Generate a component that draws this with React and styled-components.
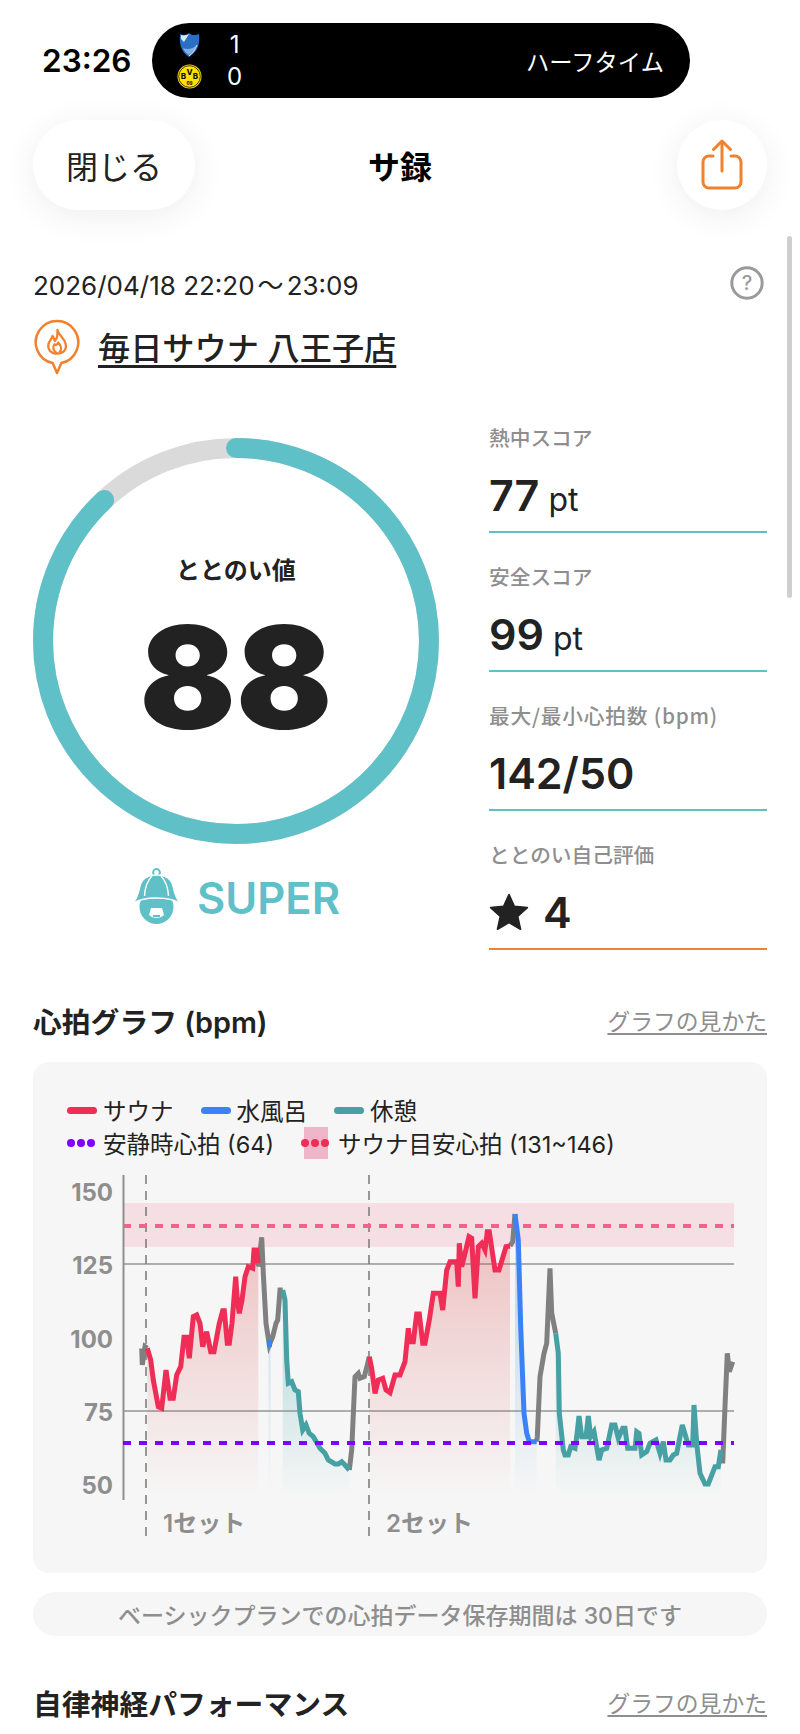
import React from 'react';
import styled, { createGlobalStyle } from 'styled-components';

const TEAL = '#5FC0C7';
const ORANGE = '#F0822F';
const GRAY = '#8E8E8E';
const INK = '#222222';

const GlobalStyle = createGlobalStyle`
  html, body {
    margin: 0;
    padding: 0;
    background: #fff;
  }
  body {
    font-family: Inter, "Noto Sans CJK JP", sans-serif;
    color: ${INK};
  }
`;

const Screen = styled.div`
  position: relative;
  width: 800px;
  height: 1734px;
  overflow: hidden;
  background: #fff;
`;

const StatusBar = styled.div`
  display: flex;
  align-items: center;
  padding: 23px 0 0 42px;
`;

const Clock = styled.div`
  width: 110px;
  font-size: 31.5px;
  font-weight: 600;
  color: #000;
`;

const LivePill = styled.div`
  display: flex;
  align-items: center;
  justify-content: space-between;
  width: 538px;
  height: 75px;
  box-sizing: border-box;
  padding: 0 26px 0 24px;
  border-radius: 38px;
  background: #000;
  color: #fff;
`;

const Match = styled.div`
  display: grid;
  grid-template-columns: 26px auto;
  column-gap: 25px;
  row-gap: 4px;
  align-items: center;
  justify-items: center;
  font-size: 24px;
  line-height: 28px;
`;

const MatchState = styled.div`
  font-size: 23.3px;
`;

const Header = styled.header`
  display: grid;
  grid-template-columns: 1fr auto 1fr;
  align-items: center;
  height: 90px;
  margin-top: 22px;
  padding: 0 33px;
`;

const CloseButton = styled.div`
  display: flex;
  align-items: center;
  justify-content: center;
  justify-self: start;
  width: 162px;
  height: 90px;
  border-radius: 45px;
  background: #fff;
  font-size: 32px;
  box-shadow: 0 6px 34px rgba(0, 0, 0, 0.07);
`;

const Title = styled.h1`
  margin: 0;
  font-size: 32px;
  font-weight: 700;
  color: #000;
`;

const ShareButton = styled.div`
  display: flex;
  align-items: center;
  justify-content: center;
  justify-self: end;
  width: 90px;
  height: 90px;
  border-radius: 50%;
  background: #fff;
  box-shadow: 0 6px 34px rgba(0, 0, 0, 0.07);
`;

const Scrollbar = styled.div`
  position: absolute;
  top: 236px;
  right: 8px;
  width: 5px;
  height: 362px;
  border-radius: 3px;
  background: #cfcfcf;
`;

const Content = styled.main`
  padding: 0 33px;
`;

const DateRow = styled.div`
  display: flex;
  align-items: center;
  justify-content: space-between;
  height: 34px;
  margin-top: 56px;
  padding-right: 3px;
  font-size: 26px;
`;

const Tilde = styled.span`
  margin: 0 3px;
`;

const Venue = styled.div`
  display: flex;
  align-items: flex-start;
  gap: 17px;
  margin-top: 19px;
  height: 56px;
`;

const VenueName = styled.a`
  margin-top: 8px;
  font-size: 32.2px;
  font-weight: 500;
  line-height: 44px;
  text-decoration: underline;
  text-decoration-thickness: 3px;
  text-underline-offset: 5px;
  color: ${INK};
`;

const Scores = styled.section`
  display: flex;
  justify-content: space-between;
  margin-top: 18px;
`;

const RingColumn = styled.div`
  display: flex;
  flex-direction: column;
  align-items: center;
  width: 406px;
  margin-top: 45px;
`;

const RingStack = styled.div`
  display: grid;
  width: 406px;
  height: 406px;

  & > * {
    grid-area: 1 / 1;
  }
`;

const RingCenter = styled.div`
  display: flex;
  flex-direction: column;
  align-items: center;
  padding-top: 115px;
`;

const RingLabel = styled.div`
  font-size: 24px;
  font-weight: 600;
  line-height: 36px;
`;

const RingValue = styled.div`
  margin-top: 3px;
  font-size: 142px;
  font-weight: 900;
  line-height: 170px;
`;

const Rank = styled.div`
  display: flex;
  align-items: center;
  gap: 15px;
  margin-top: 24px;
  font-size: 43.5px;
  font-weight: 600;
  color: ${TEAL};
`;

const Metrics = styled.div`
  display: flex;
  flex-direction: column;
  width: 278px;
`;

const Metric = styled.div`
  display: flex;
  flex-direction: column;
  height: 140px;
  box-sizing: border-box;
  padding-top: 30px;
  border-bottom: 2px solid ${(p) => (p.$accent ? ORANGE : TEAL)};
  margin-bottom: -1px;
`;

const MetricLabel = styled.div`
  font-family: "Noto Sans CJK JP", sans-serif;
  font-size: 20.7px;
  font-weight: 500;
  line-height: 28px;
  letter-spacing: ${(p) => p.$tracking || 0}px;
  color: ${GRAY};
`;

const MetricValue = styled.div`
  display: flex;
  align-items: baseline;
  gap: 9px;
  margin-top: 16px;
  font-size: 43px;
  font-weight: 600;
  line-height: 56px;
`;

const Unit = styled.span`
  font-size: 32px;
  font-weight: 400;
`;

const SectionHead = styled.div`
  display: flex;
  align-items: center;
  justify-content: space-between;
  height: 40px;
  margin-top: ${(p) => p.$top}px;
`;

const SectionTitle = styled.h2`
  margin: 0;
  font-size: 28.8px;
  font-weight: 600;
`;

const GuideLink = styled.a`
  font-size: 22.8px;
  color: ${GRAY};
  text-decoration: underline;
  text-underline-offset: 3px;
`;

const ChartCard = styled.div`
  height: 511px;
  margin-top: 22px;
  border-radius: 16px;
  background: #f6f6f6;
  overflow: hidden;
`;

const Legend = styled.div`
  display: flex;
  flex-direction: column;
  gap: 1px;
  box-sizing: border-box;
  padding: 32px 0 0 34px;
  height: 103px;
`;

const LegendRow = styled.div`
  display: flex;
  align-items: center;
  gap: ${(p) => p.$gap}px;
  height: 32px;
`;

const LegendItem = styled.div`
  display: flex;
  align-items: center;
  gap: ${(p) => p.$gap || 6}px;
  font-size: 23.5px;
  color: ${INK};
`;

const Swatch = styled.span`
  width: 30px;
  height: 7px;
  border-radius: 4px;
  background: ${(p) => p.$color};
`;

const Dots = styled.span`
  display: flex;
  flex: none;
  gap: 2px;
  width: 30px;
`;

const Dot = styled.i`
  width: 8px;
  height: 8px;
  border-radius: 50%;
  background: ${(p) => p.$color};
`;

const TargetSwatch = styled.span`
  display: flex;
  align-items: center;
  justify-content: center;
  width: 24px;
  height: 32px;
  background: #efb6c9;
`;

const ChartSvg = styled.svg`
  display: block;
`;

const Notice = styled.div`
  display: flex;
  align-items: center;
  justify-content: center;
  height: 44px;
  margin-top: 19px;
  border-radius: 22px;
  background: #f6f6f6;
  font-size: 23px;
  font-weight: 500;
  color: ${GRAY};
`;

const StarGlyph = styled.svg`
  align-self: center;
  margin-right: 5px;
`;

// traced from the reference crops: left crop starts at x30, right crop at x400, both 3x
const fromLeft = (pts) => pts.map(([x, y]) => [30 + x / 3, 1060 + y / 3]);
const fromRight = (pts) => pts.map(([x, y]) => [400 + x / 3, 1060 + y / 3]);
const toStr = (pts) => pts.map(([x, y]) => `${x.toFixed(1)},${y.toFixed(1)}`).join(' ');

const red1 = fromLeft([[352,865],[362,900],[370,960],[385,1040],[395,1045],[408,930],[420,1015],[430,1015],[440,945],[452,920],[462,832],[470,832],[478,895],[490,770],[500,765],[510,790],[518,860],[530,815],[542,875],[552,875],[568,790],[578,752],[583,752],[592,850],[598,850],[606,790],[617,650],[622,720],[628,760],[636,720],[645,650],[655,620],[668,625],[672,570],[680,570],[685,610]]);
const teal1 = fromLeft([[758,690],[765,720],[770,900],[775,970],[785,965],[795,990],[805,995],[810,1060],[818,1110],[828,1095],[838,1120],[850,1130],[870,1165],[885,1180],[895,1200],[915,1212],[925,1212],[935,1205],[945,1215],[958,1230]]);
const red2 = [
  ...fromLeft([[1018,890],[1025,925],[1035,1000],[1045,960],[1058,955],[1068,990],[1080,998],[1095,945],[1110,945]]),
  ...fromRight([[15,905],[25,805],[30,845],[40,845],[50,762],[58,762],[68,850],[75,850],[88,780],[100,700],[120,700],[128,750],[140,630],[150,605],[170,605],[175,680],[178,550],[185,620],[195,580],[207,530],[215,535],[225,715],[235,560],[245,550],[255,570],[262,515],[268,515],[285,630],[297,630],[318,560],[330,558]]),
];
const blue2 = fromRight([[345,462],[355,540],[362,800],[372,1060],[380,1120],[388,1145],[410,1145]]);
const teal2 = fromRight([[467,820],[475,880],[478,1060],[490,1170],[495,1185],[505,1185],[512,1160],[525,1165],[530,1130],[537,1068],[545,1130],[558,1130],[565,1068],[572,1130],[582,1115],[597,1200],[605,1170],[620,1165],[635,1095],[645,1095],[655,1135],[668,1105],[675,1105],[683,1165],[705,1165],[710,1115],[717,1120],[725,1185],[740,1175],[750,1150],[768,1140],[780,1180],[790,1145],[798,1200],[810,1200],[820,1185],[830,1180],[847,1095],[865,1155],[878,1155],[882,1035],[890,1150],[900,1240],[915,1272],[925,1272],[945,1220],[955,1220],[963,1170]]);

const grayTraces = [
  fromLeft([[335,865],[337,915],[345,860],[352,865]]),
  fromLeft([[685,620],[695,532],[700,640],[708,790],[718,855],[728,830],[738,790],[743,780],[750,690],[758,690]]),
  fromLeft([[958,1230],[965,1170],[975,950],[985,940],[990,955],[1003,950],[1012,915],[1018,890]]),
  fromRight([[330,558],[338,545],[345,462]]),
  fromRight([[410,1145],[412,1130],[420,950],[432,880],[440,850],[450,625],[455,760],[467,820]]),
  fromRight([[963,1170],[968,1210],[975,1040],[982,880],[988,935],[998,905]]),
];

const AREA_BOTTOM = 1495;
const areaOf = (pts) =>
  toStr([...pts, [pts[pts.length - 1][0], AREA_BOTTOM], [pts[0][0], AREA_BOTTOM]]);

const yTicks = [
  [150, 1192],
  [125, 1265],
  [100, 1339],
  [75, 1412],
  [50, 1485],
];

function HeartChart() {
  return (
    <ChartSvg width="734" height="408" viewBox="33 1165 734 408">
      <defs>
        <linearGradient id="redFill" gradientUnits="userSpaceOnUse" x1="0" y1="1240" x2="0" y2={AREA_BOTTOM}>
          <stop offset="0" stopColor="#dc4a4a" stopOpacity="0.3" />
          <stop offset="1" stopColor="#dc4a4a" stopOpacity="0" />
        </linearGradient>
        <linearGradient id="blueFill" gradientUnits="userSpaceOnUse" x1="0" y1="1300" x2="0" y2={AREA_BOTTOM}>
          <stop offset="0" stopColor="#5aa0d8" stopOpacity="0.3" />
          <stop offset="1" stopColor="#5aa0d8" stopOpacity="0" />
        </linearGradient>
        <linearGradient id="tealFill" gradientUnits="userSpaceOnUse" x1="0" y1="1370" x2="0" y2={AREA_BOTTOM}>
          <stop offset="0" stopColor="#46a8a8" stopOpacity="0.25" />
          <stop offset="1" stopColor="#46a8a8" stopOpacity="0" />
        </linearGradient>
      </defs>

      <rect x="123" y="1203" width="611" height="44" fill="#f5dfe5" />
      <line x1="123" x2="734" y1="1264" y2="1264" stroke="#adadad" strokeWidth="2" />
      <line x1="123" x2="734" y1="1411" y2="1411" stroke="#adadad" strokeWidth="2" />
      <line x1="123.5" x2="123.5" y1="1175" y2="1500" stroke="#8f8f8f" strokeWidth="2" />

      <line x1="146" x2="146" y1="1175" y2="1542" stroke="#777" strokeWidth="1.5" strokeDasharray="9 7" />
      <line x1="369" x2="369" y1="1175" y2="1542" stroke="#777" strokeWidth="1.5" strokeDasharray="9 7" />

      <polygon points={areaOf(red1)} fill="url(#redFill)" />
      <polygon points={areaOf(red2)} fill="url(#redFill)" />
      <polygon points={areaOf(blue2)} fill="url(#blueFill)" />
      <polygon points={areaOf(teal1)} fill="url(#tealFill)" />
      <polygon points={areaOf(teal2)} fill="url(#tealFill)" />
      <rect x="268.5" y="1345" width="2" height="150" fill="url(#blueFill)" />

      <line x1="123" x2="734" y1="1226" y2="1226" stroke="#f0648c" strokeWidth="4" strokeDasharray="8 8" />

      {grayTraces.map((pts, i) => (
        <polyline key={i} points={toStr(pts)} fill="none" stroke="#808080" strokeWidth="5" />
      ))}
      <polyline points={toStr(red1)} fill="none" stroke="#ef2d56" strokeWidth="5" />
      <polyline points={toStr(red2)} fill="none" stroke="#ef2d56" strokeWidth="5" />
      <polyline points={toStr(blue2)} fill="none" stroke="#3b82f6" strokeWidth="5" />
      <line x1="269.5" x2="269.5" y1="1340" y2="1347" stroke="#3b82f6" strokeWidth="5" />
      <polyline points={toStr(teal1)} fill="none" stroke="#46a0a4" strokeWidth="5" />
      <polyline points={toStr(teal2)} fill="none" stroke="#46a0a4" strokeWidth="5" />

      <line x1="123" x2="734" y1="1443" y2="1443" stroke="#7f00ff" strokeWidth="4" strokeDasharray="8 8" />

      {yTicks.map(([label, y]) => (
        <text key={label} x="113" y={y + 9} textAnchor="end" fontSize="24" fontWeight="700" fill={GRAY} fontFamily="Inter, sans-serif">
          {label}
        </text>
      ))}
      <text x="163" y="1532" fontSize="24" fontWeight="600" fill={GRAY} fontFamily='Inter, "Noto Sans CJK JP", sans-serif'>1セット</text>
      <text x="386" y="1532" fontSize="24" fontWeight="600" fill={GRAY} fontFamily='Inter, "Noto Sans CJK JP", sans-serif'>2セット</text>
    </ChartSvg>
  );
}

function ScoreRing() {
  const r = 193;
  const c = 2 * Math.PI * r;
  return (
    <svg width="406" height="406" viewBox="0 0 406 406">
      <circle cx="203" cy="203" r={r} fill="none" stroke="#dadada" strokeWidth="20" />
      <circle
        cx="203"
        cy="203"
        r={r}
        fill="none"
        stroke={TEAL}
        strokeWidth="20"
        strokeLinecap="round"
        strokeDasharray={`${c * 0.88} ${c}`}
        transform="rotate(-90 203 203)"
      />
    </svg>
  );
}

function HoffenheimCrest() {
  return (
    <svg width="22" height="24" viewBox="0 0 22 24">
      <path d="M2 1 C7 3 10 1 11 0 C13 2 17 3 21 1 C22 9 21 18 11 24 C3 19 1 10 2 1 Z" fill="#2a6fc4" />
      <path d="M3 2 C6 3 9 2 11 1 L6 9 L3 6 Z" fill="#dbe8f5" />
      <path d="M5 15 C9 17 14 16 18 13 C16 18 14 20 11 22 C8 20 6 18 5 15 Z" fill="#7fb0e2" />
      <path d="M19 12 C17 17 15 20 11 23" fill="none" stroke="#e6eef7" strokeWidth="1" />
    </svg>
  );
}

function DortmundCrest() {
  return (
    <svg width="25" height="25" viewBox="0 0 25 25" fontFamily="Inter, sans-serif" fontWeight="800" fill="#111" textAnchor="middle">
      <circle cx="12.5" cy="12.5" r="12" fill="#ffe100" />
      <circle cx="12.5" cy="12.5" r="10.8" fill="none" stroke="#111" strokeWidth="0.8" />
      <text x="6.5" y="15" fontSize="8">B</text>
      <text x="12.5" y="10.5" fontSize="8">V</text>
      <text x="18.5" y="15" fontSize="8">B</text>
      <text x="12.5" y="20.5" fontSize="4.5">09</text>
    </svg>
  );
}

function ShareIcon() {
  return (
    <svg width="44" height="52" viewBox="0 0 44 52" fill="none" stroke={ORANGE} strokeWidth="3" strokeLinecap="round" strokeLinejoin="round">
      <path d="M13 17 H9 a6 6 0 0 0 -6 6 V43 a6 6 0 0 0 6 6 H35 a6 6 0 0 0 6 -6 V23 a6 6 0 0 0 -6 -6 H31" />
      <path d="M22 32 V3" />
      <path d="M13.5 10.5 L22 2 L30.5 10.5" />
    </svg>
  );
}

function HelpIcon() {
  return (
    <svg width="34" height="34" viewBox="0 0 34 34">
      <circle cx="17" cy="17" r="15.2" fill="none" stroke="#9a9a9a" strokeWidth="3" />
      <text x="17" y="24" textAnchor="middle" fontSize="20" fontWeight="500" fill="#9a9a9a" fontFamily="Inter, sans-serif">?</text>
    </svg>
  );
}

function FlamePinIcon() {
  return (
    <svg width="48" height="56" viewBox="0 0 48 58" fill="none" stroke={ORANGE} strokeWidth="2.6" strokeLinejoin="round">
      <path d="M19.5 45.6 A22 22 0 1 1 28.5 45.6 L24 56 Z" fill="#fff" />
      <g transform="translate(24 24) scale(0.85) translate(-24.5 -25)" strokeWidth="2.8">
        <path d="M25 10 C26 16 33 19 35 27 C37 35 31 39 24.5 39 C17 39 13 34 14 27.5 C15 23 18 22 19 17.5 C21 20 21 22 22 23.5 C25 20 25.5 15 25 10 Z" />
        <path d="M24.5 38.5 C20 36 18.5 31 21.5 27.5 C23.5 29.5 25 27.5 26 25.5 C29.5 29 31 34 27 38" />
      </g>
    </svg>
  );
}

function SaunaHatIcon() {
  return (
    <svg width="50" height="60" viewBox="12 18 50 60">
      <circle cx="36.5" cy="57" r="17" fill={TEAL} />
      <circle cx="36.5" cy="22.5" r="3.4" fill="none" stroke={TEAL} strokeWidth="2" />
      <path d="M12 54 C16 50 18 45 19.5 38 C21 29 28 25 36.5 25 C45 25 52 29 53.5 38 C55 45 57 50 61 54 C50 46 23 46 12 54 Z" fill={TEAL} stroke="#fff" strokeWidth="1.4" strokeLinejoin="round" />
      <path d="M32 26 C27 31 25 38 24.5 46 M41 26 C46 31 48 38 48.5 46" fill="none" stroke="#fff" strokeWidth="1.4" />
      <path d="M31 58 H42 L44 65 C40 69 33 69 29 65 Z" fill="#fff" />
      <path d="M33 65 H40 V67 H33 Z" fill={TEAL} />
    </svg>
  );
}

function StarIcon() {
  return (
    <StarGlyph width="40" height="40" viewBox="0 0 24 24">
      <path d="M12 1.5 L15.2 8.6 L23 9.4 L17.2 14.6 L18.9 22.3 L12 18.3 L5.1 22.3 L6.8 14.6 L1 9.4 L8.8 8.6 Z" fill={INK} stroke={INK} strokeLinejoin="round" strokeWidth="1" />
    </StarGlyph>
  );
}

export default function App() {
  return (
    <Screen>
      <GlobalStyle />
      <StatusBar>
        <Clock>23:26</Clock>
        <LivePill>
          <Match>
            <HoffenheimCrest />
            <span>1</span>
            <DortmundCrest />
            <span>0</span>
          </Match>
          <MatchState>ハーフタイム</MatchState>
        </LivePill>
      </StatusBar>

      <Header>
        <CloseButton>閉じる</CloseButton>
        <Title>サ録</Title>
        <ShareButton>
          <ShareIcon />
        </ShareButton>
      </Header>
      <Scrollbar />

      <Content>
        <DateRow>
          <span>2026/04/18 22:20<Tilde>～</Tilde>23:09</span>
          <HelpIcon />
        </DateRow>
        <Venue>
          <FlamePinIcon />
          <VenueName>毎日サウナ 八王子店</VenueName>
        </Venue>

        <Scores>
          <RingColumn>
            <RingStack>
              <ScoreRing />
              <RingCenter>
                <RingLabel>ととのい値</RingLabel>
                <RingValue>88</RingValue>
              </RingCenter>
            </RingStack>
            <Rank>
              <SaunaHatIcon />
              <span>SUPER</span>
            </Rank>
          </RingColumn>

          <Metrics>
            <Metric>
              <MetricLabel>熱中スコア</MetricLabel>
              <MetricValue>77<Unit>pt</Unit></MetricValue>
            </Metric>
            <Metric>
              <MetricLabel>安全スコア</MetricLabel>
              <MetricValue>99<Unit>pt</Unit></MetricValue>
            </Metric>
            <Metric>
              <MetricLabel $tracking={0.8}>最大/最小心拍数 (bpm)</MetricLabel>
              <MetricValue>142/50</MetricValue>
            </Metric>
            <Metric $accent>
              <MetricLabel>ととのい自己評価</MetricLabel>
              <MetricValue><StarIcon />4</MetricValue>
            </Metric>
          </Metrics>
        </Scores>

        <SectionHead $top={51}>
          <SectionTitle>心拍グラフ (bpm)</SectionTitle>
          <GuideLink>グラフの見かた</GuideLink>
        </SectionHead>
        <ChartCard>
          <Legend>
            <LegendRow $gap={27}>
              <LegendItem><Swatch $color="#ef2d56" />サウナ</LegendItem>
              <LegendItem><Swatch $color="#3b82f6" />水風呂</LegendItem>
              <LegendItem><Swatch $color="#46a0a4" />休憩</LegendItem>
            </LegendRow>
            <LegendRow $gap={30}>
              <LegendItem>
                <Dots>
                  <Dot $color="#7f00ff" /><Dot $color="#7f00ff" /><Dot $color="#7f00ff" />
                </Dots>
                安静時心拍 (64)
              </LegendItem>
              <LegendItem $gap={10}>
                <TargetSwatch>
                  <Dots>
                    <Dot $color="#ef2d56" /><Dot $color="#ef2d56" /><Dot $color="#ef2d56" />
                  </Dots>
                </TargetSwatch>
                サウナ目安心拍 (131~146)
              </LegendItem>
            </LegendRow>
          </Legend>
          <HeartChart />
        </ChartCard>
        <Notice>ベーシックプランでの心拍データ保存期間は 30日です</Notice>

        <SectionHead $top={46}>
          <SectionTitle>自律神経パフォーマンス</SectionTitle>
          <GuideLink>グラフの見かた</GuideLink>
        </SectionHead>
      </Content>
    </Screen>
  );
}
